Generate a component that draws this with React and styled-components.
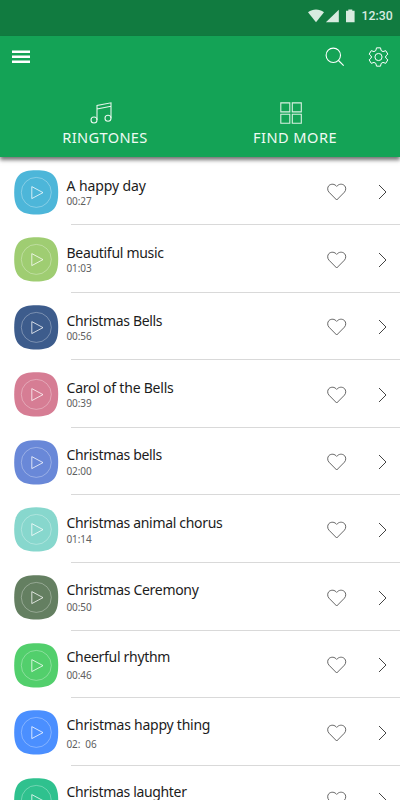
import styled, { createGlobalStyle } from "styled-components";

const GlobalStyle = createGlobalStyle`
  * {
    box-sizing: border-box;
  }
  body {
    margin: 0;
    background: #fff;
    overflow: hidden;
  }
`;

//#region styled-components
const Container = styled.div`
  width: 400px;
  height: 800px;
  display: flex;
  flex-direction: column;
  overflow: hidden;
  background-color: #fff;
  font-family: "Noto Sans", "Open Sans", "Noto Sans CJK SC", sans-serif;
`;

// status bar
const StatusBar = styled.div`
  flex: none;
  height: 35.5px;
  padding: 0 7.5px 3.5px 0;
  display: flex;
  align-items: center;
  justify-content: flex-end;
  background-color: #117b40;
  color: #d8ebe0;
`;

const StatusIcons = styled.svg`
  display: block;
  margin-right: 7px;
`;

const Clock = styled.span`
  width: 31px;
  font: 500 12.3px/16px Roboto, sans-serif;
  white-space: nowrap;
`;

// header
const Header = styled.header`
  flex: none;
  height: 121.5px;
  background-color: #14a356;
  box-shadow: 0 3px 4px rgba(0, 0, 0, 0.55);
  clip-path: inset(0 0 -10px 0);
`;

const Toolbar = styled.div`
  height: 43px;
  padding: 0 11px 0 12px;
  display: flex;
  align-items: center;
`;

const IconButton = styled.button`
  display: flex;
  padding: 0;
  border: none;
  background-color: initial;
  margin-left: ${({ $left }) => $left || "0"};
`;

const Tabs = styled.nav`
  display: grid;
  grid-template-columns: 210px 170px;
  padding-top: 23.5px;
`;

const Tab = styled.div`
  display: flex;
  flex-direction: column;
  align-items: center;
`;

const TabIcon = styled.svg`
  display: block;
  margin-right: 8px;
`;

const TabLabel = styled.span`
  margin-top: 3.4px;
  color: #effaf3;
  font-size: 14.6px;
  line-height: 20px;
  letter-spacing: ${({ $spacing }) => $spacing};
  white-space: nowrap;
`;

// list
const List = styled.ul`
  margin: 0;
  padding: 0.5px 0 0;
  list-style: none;
`;

const Item = styled.li`
  height: 67.6px;
  padding: 12px 11.5px 0 13.5px;
  display: flex;
  align-items: flex-start;
  background: linear-gradient(#d9d9d9, #d9d9d9) 71px 100% / 100% 1px no-repeat;
`;

const Cover = styled.svg`
  flex: none;
  display: block;
`;

const Info = styled.div`
  flex: 1;
  padding-left: 8px;
  margin-top: ${({ $shift }) => $shift}px;
`;

const Title = styled.div`
  height: 18px;
  font-size: 14px;
  line-height: 18px;
  letter-spacing: ${({ $spacing }) => $spacing}px;
  color: #1c1c1c;
  white-space: nowrap;
`;

const Time = styled.div`
  margin-top: ${({ $gap }) => $gap}px;
  font-size: 10px;
  line-height: 12px;
  letter-spacing: -0.1px;
  color: #606060;
  white-space: pre;
`;

const Actions = styled.div`
  display: flex;
  align-items: center;
  height: 45px;
  gap: 30px;
`;
//#endregion styled-components

const songs = [
  { title: "A happy day", time: "00:27", color: "#4db6d9", gap: 0, spacing: -0.1 },
  { title: "Beautiful music", time: "01:03", color: "#9fcd72", gap: 0, spacing: -0.3 },
  { title: "Christmas Bells", time: "00:56", color: "#3d5c8c", gap: 0.2, spacing: -0.35 },
  { title: "Carol of the Bells", time: "00:39", color: "#d67d94", gap: 0.2, spacing: -0.22 },
  { title: "Christmas bells", time: "02:00", color: "#6988d8", gap: 0.5, spacing: -0.33 },
  { title: "Christmas animal chorus", time: "01:14", color: "#87d7cd", gap: 1, spacing: -0.32 },
  { title: "Christmas Ceremony", time: "00:50", color: "#647f61", gap: 2, spacing: -0.3 },
  { title: "Cheerful rhythm", time: "00:46", color: "#52cf6c", gap: 3, spacing: -0.3 },
  { title: "Christmas happy thing", time: "02:  06", color: "#4b8fff", gap: 4.5, spacing: -0.24 },
  { title: "Christmas laughter", color: "#2fc18e", spacing: -0.33 },
];

function PlayCover({ color }) {
  return (
    <Cover width="45" height="45" viewBox="0 0 45 45">
      <path
        d="M22.2.3C38.3.3 44.2 5.8 44.2 22.3S38.3 44.5 22.2 44.5.2 38.8.2 22.3 6.1.3 22.2.3Z"
        fill={color}
      />
      <circle cx="22.3" cy="22.4" r="15" fill="none" stroke="#fff" strokeOpacity=".45" strokeWidth=".7" />
      <path d="M17.8 16.6v12l11.2-6z" fill="none" stroke="#fff" strokeOpacity=".85" strokeWidth=".9" />
    </Cover>
  );
}

function SongItem({ song, index }) {
  return (
    <Item>
      <PlayCover color={song.color} />
      <Info $shift={7.4 - index * 0.25}>
        <Title $spacing={song.spacing}>{song.title}</Title>
        {song.time && <Time $gap={song.gap}>{song.time}</Time>}
      </Info>
      <Actions>
        <svg width="20" height="18" viewBox="0 0 20 18" fill="none" stroke="#555" strokeWidth=".9">
          <path d="M9.7 17 2 9.2C.2 7.2.3 4.2 1.9 2.6 4.1.5 7.7.8 9.7 3.4 11.7.8 15.3.5 17.5 2.6 19.1 4.2 19.2 7.2 17.4 9.2Z" />
        </svg>
        <svg width="12" height="16" viewBox="0 0 12 16" fill="none" stroke="#444" strokeWidth="1">
          <path d="m2 1 7 7-7 7" />
        </svg>
      </Actions>
    </Item>
  );
}

export default function App() {
  return (
    <Container>
      <GlobalStyle />
      <StatusBar>
        <StatusIcons width="48" height="16" viewBox="0 0 48 16" fill="currentColor">
          <path d="M1 4.3C6 .7 12 .7 17 4.3L9 14.3Z" />
          <path d="M31.8 1.7v12.6H18.9z" />
          <path d="M39 2.8h2.3V1.5h4v1.3h2.3v11.5H39z" />
        </StatusIcons>
        <Clock>12:30</Clock>
      </StatusBar>
      <Header>
        <Toolbar>
          <IconButton>
            <svg width="18" height="14" viewBox="0 0 18 14" fill="#fff">
              <path d="M0 .5h18v2.4H0zM0 5.6h18V8H0zM0 10.6h18V13H0z" />
            </svg>
          </IconButton>
          <IconButton $left="auto">
            <svg width="20" height="20" viewBox="0 0 20 20" fill="none" stroke="#fff" strokeWidth="1.1">
              <circle cx="8.3" cy="8.3" r="7.2" />
              <path d="m13.5 13.5 5.2 5.2" />
            </svg>
          </IconButton>
          <IconButton $left="23px">
            <svg width="21" height="20" viewBox="0 0 24 24" fill="none" stroke="#fff" strokeWidth="1.2">
              <circle cx="12" cy="12" r="4.3" />
              <path
                d="M9.6 1h4.8l.8 3.3 2.2 1.2 3.3-1.1 2.5 4.2-2.5 2.2v2.4l2.5 2.2-2.5 4.2-3.3-1.1-2.2 1.2-.8 3.3H9.6l-.8-3.3-2.2-1.2-3.3 1.1-2.5-4.2 2.5-2.2v-2.4L.8 8.6l2.5-4.2 3.3 1.1 2.2-1.2Z"
                strokeLinejoin="round"
              />
            </svg>
          </IconButton>
        </Toolbar>
        <Tabs>
          <Tab>
            <TabIcon width="22" height="22" viewBox="0 0 22 22" fill="none" stroke="#e6f6ec" strokeWidth="1.1">
              <circle cx="4" cy="18" r="3" />
              <circle cx="18" cy="16.2" r="3" />
              <path d="M7 18V3.5L21 .8v15.4M7 7 21 4.3" />
            </TabIcon>
            <TabLabel $spacing="0.35px">RINGTONES</TabLabel>
          </Tab>
          <Tab>
            <TabIcon width="22" height="22" viewBox="0 0 22 22" fill="none" stroke="#d9f1e2" strokeWidth="1.1">
              <path d="M.8.9h9v9h-9zM12.3.9h9v9h-9zM.8 12.3h9v9h-9zM12.3 12.3h9v9h-9z" />
            </TabIcon>
            <TabLabel $spacing="0.45px">FIND MORE</TabLabel>
          </Tab>
        </Tabs>
      </Header>
      <List>
        {songs.map((song, index) => (
          <SongItem key={index} song={song} index={index} />
        ))}
      </List>
    </Container>
  );
}
